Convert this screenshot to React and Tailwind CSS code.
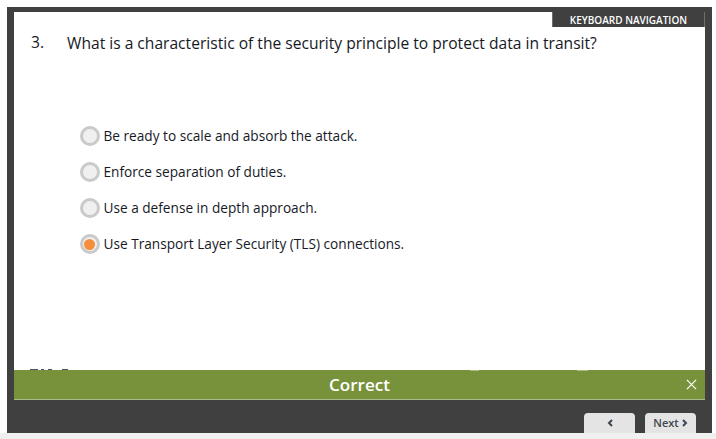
import React from "react";

const answers = [
  { text: "Be ready to scale and absorb the attack." },
  { text: "Enforce separation of duties." },
  { text: "Use a defense in depth approach." },
  { text: "Use Transport Layer Security (TLS) connections.", selected: true },
];

function Radio({ selected }) {
  return (
    <span className="flex h-5 w-5 shrink-0 items-center justify-center rounded-full border-[3px] border-[#cacaca] bg-[#f0f0f0]">
      {selected && <span className="h-[11px] w-[11px] rounded-full bg-[#f58f3c]" />}
    </span>
  );
}

function Chevron({ dir }) {
  return (
    <svg viewBox="0 0 6 8" className="h-2 w-1.5" fill="none" stroke="#3d4650" strokeWidth="2">
      <path d={dir === "left" ? "M5 1 L2 4 L5 7" : "M1 1 L4 4 L1 7"} />
    </svg>
  );
}

export default function App() {
  return (
    <div className="flex h-[439px] w-[716px] flex-col overflow-hidden bg-white font-['Open_Sans',sans-serif]">
      <div className="ml-[7px] mr-[4px] mt-[7px] flex h-[426px] flex-col bg-[#404040] pl-[7px] pr-[7px] pt-[5px]">
        <div className="flex h-[358px] flex-col overflow-hidden bg-white">
          <div className="flex justify-end">
            <div className="flex h-[15px] w-[153px] items-center justify-center border-x border-[#6e6e6e] bg-[#404040] text-[10px] font-semibold leading-none text-white">
              KEYBOARD NAVIGATION
            </div>
          </div>
          <div className="ml-[17px] mt-[5px] flex text-[15.6px] leading-[22px] text-[#16191f]">
            <span className="-mt-[1px] w-[36px] shrink-0">3.</span>
            <span>What is a characteristic of the security principle to protect data in transit?</span>
          </div>
          <div className="ml-[65.5px] mt-[72px] flex flex-col gap-4">
            {answers.map((answer) => (
              <div key={answer.text} className="flex h-5 items-center gap-1 text-[13.65px] text-[#16191f]">
                <Radio selected={answer.selected} />
                <span>{answer.text}</span>
              </div>
            ))}
          </div>
          {/* logo behind the banner, only its top edge shows */}
          <svg viewBox="0 0 42 2" className="ml-[16px] mt-auto h-[2px] w-[42px]" fill="#4a5668">
            <path d="M0 1 H8 V2 H0 Z M11 1 H14 V2 H11 Z M18 1 H22 V2 H18 Z M32 1 H38 V2 H32 Z" />
          </svg>
        </div>
        <div className="relative flex h-[30px] items-center justify-center border-b border-[#a9ba88] bg-[#78923c] pt-[1px]">
          <span className="absolute left-[456px] top-0 h-px w-[9px] bg-[#b0bb8c]" />
          <span className="absolute left-[563px] top-0 h-px w-[11px] bg-[#b0bb8c]" />
          <span className="text-[17px] font-semibold text-white">Correct</span>
          <svg viewBox="0 0 12 12" className="absolute right-[8px] top-[9px] h-[11px] w-[11px]" stroke="white" strokeWidth="1.4">
            <path d="M1 1 L11 11 M11 1 L1 11" />
          </svg>
        </div>
        <div className="flex flex-1 items-end justify-end gap-[10px] pr-[9px]">
          <div className="flex h-5 w-[51px] items-center justify-center rounded-t-[4px] bg-[#e4e4e4]">
            <Chevron dir="left" />
          </div>
          <div className="flex h-5 w-[51px] items-center justify-center gap-[3px] rounded-t-[4px] bg-[#e4e4e4] text-[11px] font-semibold text-[#3d4650]">
            Next
            <Chevron dir="right" />
          </div>
        </div>
      </div>
      <div className="flex-1 bg-[#f0f0f0]" />
    </div>
  );
}
